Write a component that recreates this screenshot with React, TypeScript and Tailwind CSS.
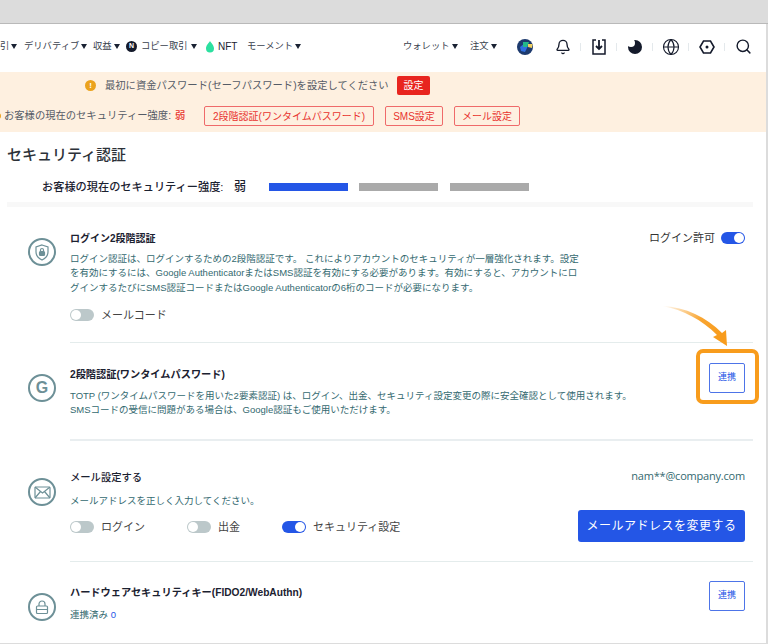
import React from 'react';
import { Bell, Globe, Search } from 'lucide-react';

const Caret = () => <span className="inline-block shrink-0 w-0 h-0 border-x-[3.5px] border-x-transparent border-t-[5px] border-t-[#1a2233] ml-[2px]" />;

const Toggle = ({ on = false }: { on?: boolean }) => (
  <span className={`flex items-center w-[24px] h-[12px] rounded-full p-[1px] ${on ? 'bg-[#2456e6] justify-end' : 'bg-[#bcc8ca] justify-start'}`}>
    <span className="block w-[10px] h-[10px] rounded-full bg-white" />
  </span>
);

const Sep = () => <span className="block ml-[9px] mr-[10px] w-px h-[8px] bg-[#e4e9ec]" />;

const CircleIcon = ({ children }: { children: React.ReactNode }) => (
  <div className="flex items-center justify-center shrink-0 w-[28px] h-[28px] rounded-full border-2 border-[#6d9097] text-[#6d9097]">
    {children}
  </div>
);

const LinkButton = () => (
  <button className="w-[36px] h-[30px] rounded-[2px] border border-[#4d74e8] bg-white text-[9px] text-[#2456e6]">連携</button>
);

const RedTag = ({ children, className }: { children: React.ReactNode; className: string }) => (
  <span className={`flex items-center justify-center h-[20px] rounded-[2px] border border-[#ef6a6a] text-[10px] text-[#e8332e] ${className}`}>{children}</span>
);

export default function App() {
  return (
    <div className="relative w-[768px] h-[644px] overflow-hidden bg-white font-['Liberation_Sans','Noto_Sans_CJK_JP',sans-serif] text-[#1b2130]">
      <div className="h-[24px] bg-[#dcdcdc] border-b border-[#b9b9b9]" />

      {/* Nav */}
      <nav className="flex items-center h-[48px] pb-[3px] text-[9.300px] text-[#39414d] whitespace-nowrap">
        <span className="flex items-center w-[18px]">引<Caret /></span>
        <span className="flex items-center ml-[6px] w-[63px]">デリバティブ<Caret /></span>
        <span className="flex items-center ml-[6px] w-[26px]">収益<Caret /></span>
        <span className="flex items-center justify-center ml-[7px] w-[11px] h-[11px] rounded-full bg-[#141a2b] text-white text-[7px] font-bold">N</span>
        <span className="ml-[4px] w-[48px]">コピー取引</span>
        <Caret />
        <svg className="ml-[8px]" width="10" height="12" viewBox="0 0 10 12"><path d="M5 0c1 2 4 4 4 7.500a4 4 0 0 1-8 0C1 4 4 2 5 0z" fill="#2ce0a0" /></svg>
        <span className="ml-[3px] w-[29px] text-[10px] font-medium text-[#1b2130]">NFT</span>
        <span className="flex items-center w-[54px]">モーメント<Caret /></span>
        <span className="flex items-center ml-[102px] w-[55px]">ウォレット<Caret /></span>
        <span className="flex items-center ml-[12px] w-[27px]">注文<Caret /></span>
        <svg className="ml-[20px]" width="16" height="16" viewBox="0 0 16 16">
          <circle cx="8" cy="8" r="8" fill="#1d3a6e" />
          <path d="M3 8l5-4 3 3-3 6-4-1z" fill="#2f6fe0" />
          <path d="M6 3h6l-2 5H6z" fill="#22b98a" />
          <path d="M11 5h4.500l-.5 4-4-1z" fill="#f0d060" />
        </svg>
        <Bell className="ml-[22px] text-[#141a2b]" size={16} strokeWidth={2} />
        <Sep />
        <svg width="16" height="16" viewBox="0 0 16 16" fill="none" stroke="#141a2b" strokeWidth="1.500">
          <path d="M5 1H2v14h12V1h-3" />
          <path d="M8 1v9M5 7l3 3 3-3" strokeWidth="1.800" />
        </svg>
        <Sep />
        <svg width="16" height="16" viewBox="0 0 16 16">
          <circle cx="8" cy="8" r="7" fill="#141a2b" />
          <circle cx="4" cy="4" r="4" fill="#ffffff" />
        </svg>
        <Sep />
        <Globe className="-mx-[1px] text-[#141a2b]" size={18} strokeWidth={1.500} />
        <Sep />
        <svg width="16" height="14" viewBox="0 0 16 14" fill="none" stroke="#141a2b" strokeWidth="1.600">
          <path d="M4.500 1h7L15 7l-3.500 6h-7L1 7z" />
          <circle cx="8" cy="7" r="1.500" fill="#141a2b" stroke="none" />
        </svg>
        <Sep />
        <Search className="text-[#141a2b]" size={17} strokeWidth={2} />
      </nav>

      {/* Banner */}
      <div className="h-[60px] bg-[#fef0e0] text-[10.300px] text-[#555b66]">
        <div className="flex items-center h-[31px] pb-[4px] pl-[85px]">
          <span className="flex items-center justify-center w-[11px] h-[11px] rounded-full bg-[#eba21d] text-white text-[8px] font-bold">!</span>
          <span className="ml-[9px] w-[283px] whitespace-nowrap">最初に資金パスワード(セーフパスワード)を設定してください</span>
          <span className="flex items-center justify-center ml-[9px] w-[33px] h-[19px] rounded-[2px] bg-[#e8251f] text-white text-[10px]">設定</span>
        </div>
        <div className="flex items-center h-[26px] -ml-[5px]">
          <span className="w-[6px] h-[6px] rounded-full bg-[#eba21d] shrink-0" />
          <span className="ml-[3px] w-[168px] whitespace-nowrap">お客様の現在のセキュリティー強度:</span>
          <span className="ml-[3px] w-[29px] font-medium text-[#e8332e]">弱</span>
          <RedTag className="w-[170px]">2段階認証(ワンタイムパスワード)</RedTag>
          <RedTag className="ml-[11px] w-[58px]">SMS設定</RedTag>
          <RedTag className="ml-[11px] w-[66px]">メール設定</RedTag>
        </div>
      </div>

      {/* Heading */}
      <h1 className="pl-[7px] pt-[12px] h-[42px] text-[15px] leading-[22px] font-medium text-[#2c3138]">セキュリティ認証</h1>
      <div className="flex items-center h-[28px] pl-[42px] pb-[2px]">
        <span className="w-[180px] text-[11.200px] font-medium whitespace-nowrap">お客様の現在のセキュリティー強度:</span>
        <span className="ml-[12px] w-[35px] text-[12px] font-medium">弱</span>
        <span className="w-[79px] h-[8px] bg-[#2456e6]" />
        <span className="ml-[11px] w-[79px] h-[8px] bg-[#aaaaaa]" />
        <span className="ml-[12px] w-[79px] h-[8px] bg-[#aaaaaa]" />
      </div>
      <div className="ml-[7px] mr-[15px] h-[5px] bg-[#f8f8f8]" />

      {/* Row 1 */}
      <section className="flex pl-[28px] pr-[15px]">
        <div className="pt-[31px] w-[42px] shrink-0">
          <CircleIcon>
            <svg width="16" height="17" viewBox="0 0 16 17" fill="none" stroke="currentColor" strokeWidth="1.200">
              <path d="M8 1l6 2v5c0 4-3 6.500-6 8-3-1.500-6-4-6-8V3z" />
              <rect x="5.500" y="7.500" width="5" height="4" rx="1" fill="currentColor" />
              <path d="M6.500 7.500V6a1.500 1.500 0 0 1 3 0v1.500" />
            </svg>
          </CircleIcon>
        </div>
        <div className="flex-1 h-[136px] pt-[24px] pr-[8px] border-b border-[#e4ecec]">
          <div className="flex justify-between items-center h-[14px]">
            <h3 className="text-[10px] font-bold">ログイン2段階認証</h3>
            <div className="flex items-center gap-[6px] text-[11px] text-[#333]">ログイン許可<Toggle on /></div>
          </div>
          <p className="mt-[7px] w-[510px] text-[9.500px] leading-[14.300px] text-[#33696f]">
            ログイン認証は、ログインするための2段階認証です。 これによりアカウントのセキュリティが一層強化されます。設定<br />
            を有効にするには、Google AuthenticatorまたはSMS認証を有効にする必要があります。有効にすると、アカウントにロ<br />
            グインするたびにSMS認証コードまたはGoogle Authenticatorの6桁のコードが必要になります。
          </p>
          <div className="flex items-center mt-[12px] gap-[7px] text-[11px] text-[#444]"><Toggle />メールコード</div>
        </div>
      </section>

      {/* Row 2 */}
      <section className="flex pl-[28px] pr-[15px]">
        <div className="pt-[31px] w-[42px] shrink-0">
          <CircleIcon><span className="text-[16px] leading-none font-bold">G</span></CircleIcon>
        </div>
        <div className="flex justify-between flex-1 h-[98px] pt-[25px] pr-[8px] border-b-2 border-[#e9eef0]">
          <div>
            <h3 className="text-[10.200px] font-bold leading-[14px]">2段階認証(ワンタイムパスワード)</h3>
            <p className="mt-[7px] text-[9.500px] leading-[14.300px] text-[#33696f] whitespace-nowrap">
              TOTP (ワンタイムパスワードを用いた2要素認証) は、ログイン、出金、セキュリティ設定変更の際に安全確認として使用されます。<br />
              SMSコードの受信に問題がある場合は、Google認証もご使用いただけます。
            </p>
          </div>
          <div className="-mt-[5px]"><LinkButton /></div>
        </div>
      </section>

      {/* Row 3 */}
      <section className="flex pl-[28px] pr-[15px]">
        <div className="pt-[37px] w-[42px] shrink-0">
          <CircleIcon>
            <svg width="17" height="13" viewBox="0 0 17 13" fill="none" stroke="currentColor" strokeWidth="1.200">
              <rect x="1" y="1" width="15" height="11" rx="1" />
              <path d="M1 1l7.500 6L16 1M1 12l5.500-6.500M16 12l-5.500-6.500" />
            </svg>
          </CircleIcon>
        </div>
        <div className="flex justify-between flex-1 h-[121px] pt-[30px] pr-[8px] border-b border-[#e4ecec]">
          <div>
            <h3 className="text-[10.300px] font-medium leading-[14px]">メール設定する</h3>
            <p className="mt-[9px] text-[9.500px] leading-[14px] text-[#33696f]">メールアドレスを正しく入力してください。</p>
            <div className="flex items-center mt-[11px] h-[16px] text-[11px] text-[#444]">
              <span className="flex items-center gap-[7px] w-[117px]"><Toggle />ログイン</span>
              <span className="flex items-center gap-[7px] w-[95px]"><Toggle />出金</span>
              <span className="flex items-center gap-[7px]"><Toggle on />セキュリティ設定</span>
            </div>
          </div>
          <div className="flex flex-col items-end -mt-[2px]">
            <span className="text-[11px] tracking-[-0.2px] leading-[14px] text-[#33696f] font-['Open_Sans',sans-serif]">nam**@company.com</span>
            <button className="mt-[27px] w-[167px] h-[32px] rounded-[3px] bg-[#2456e6] text-white text-[12px] tracking-[0.5px]">メールアドレスを変更する</button>
          </div>
        </div>
      </section>

      {/* Row 4 */}
      <section className="flex pl-[28px] pr-[15px]">
        <div className="pt-[31px] w-[42px] shrink-0">
          <CircleIcon>
            <svg width="14" height="15" viewBox="0 0 14 15" fill="none" stroke="currentColor" strokeWidth="1.200">
              <rect x="1.500" y="6" width="11" height="7.500" rx="1" />
              <path d="M4 6V4a3 3 0 0 1 6 0v2M1.500 9.500h11" />
            </svg>
          </CircleIcon>
        </div>
        <div className="flex justify-between flex-1 h-[81px] pt-[24px] pr-[8px]">
          <div>
            <h3 className="text-[10.200px] font-bold leading-[14px]">ハードウェアセキュリティキー(FIDO2/WebAuthn)</h3>
            <p className="mt-[8px] text-[9.500px] leading-[14px] text-[#33696f]">連携済み <span className="text-[#2456e6]">0</span></p>
          </div>
          <div className="-mt-[5px]"><LinkButton /></div>
        </div>
      </section>

      {/* Frame edges */}
      <div className="absolute top-[24px] right-0 w-[2px] h-[620px] bg-[#dcdcdc]" />
      <div className="absolute bottom-0 left-0 w-full h-[1px] bg-[#dcdcdc]" />

      {/* Callout */}
      <div className="absolute left-[696px] top-[349px] w-[63px] h-[55px] rounded-[7px] border-[4px] border-[#f89c1c]" />
      <svg className="absolute left-[660px] top-[300px]" width="75" height="50" viewBox="0 0 75 50" fill="none">
        <defs>
          <linearGradient id="arrowFade" x1="0" y1="0" x2="1" y2="0.500">
            <stop offset="0" stopColor="#f89c1c" stopOpacity="0" />
            <stop offset="0.600" stopColor="#f89c1c" stopOpacity="0.900" />
            <stop offset="1" stopColor="#f89c1c" />
          </linearGradient>
        </defs>
        <path d="M2 6C26 7 46 17 62 33L66 30 67 46 53 37 57 35C42 20 24 10 2 6z" fill="url(#arrowFade)" />
      </svg>
    </div>
  );
}
